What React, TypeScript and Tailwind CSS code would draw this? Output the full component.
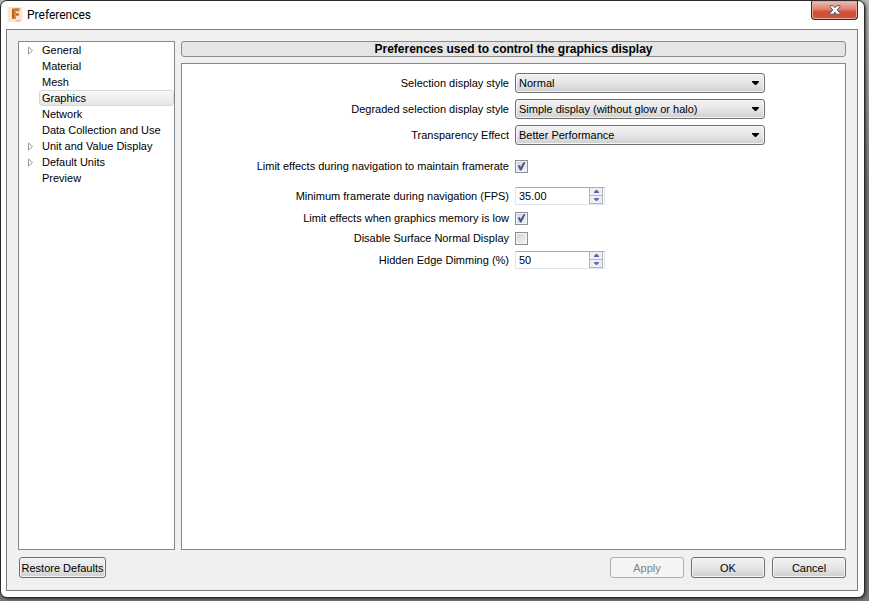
import { useState } from "react";
import type { ReactNode } from "react";
import clsx from "clsx";

interface TreeItem {
  label: string;
  expandable?: boolean;
}

const TREE_ITEMS: TreeItem[] = [
  { label: "General", expandable: true },
  { label: "Material" },
  { label: "Mesh" },
  { label: "Graphics" },
  { label: "Network" },
  { label: "Data Collection and Use" },
  { label: "Unit and Value Display", expandable: true },
  { label: "Default Units", expandable: true },
  { label: "Preview" },
];

function AppIcon() {
  return (
    <svg width="16" height="16" viewBox="0 0 16 16" aria-hidden="true">
      <rect x=".5" width="15" height="15" rx="1" fill="#fce4d2" />
      <path d="M5 1.500h7.500v3H9v2h2.800v2.500H9v3H5z" fill="#e08a3c" />
      <path d="M5 1.500l2 1v9.500l-2-1z" fill="#b5651f" />
      <path d="M7 1.500h5.500v1.500H7z" fill="#c07030" />
      <path d="M9 6.500h2.800v1.200H9z" fill="#a65a20" />
      <path d="M8.500 13h4.500v1.500H8.500z" fill="#f3b888" />
    </svg>
  );
}

function TitleBar() {
  return (
    <header className="flex h-7 shrink-0 items-start justify-between">
      <div className="flex h-7 items-center gap-1 pl-[6px]">
        <AppIcon />
        <h1 className="font-[Roboto,sans-serif] text-[12px] text-black">Preferences</h1>
      </div>
      <button
        type="button"
        aria-label="Close"
        className="mr-[6px] flex h-[19px] w-[47px] items-center justify-center rounded-b-[4px] border border-t-0 border-[#4a2325] bg-linear-to-b from-[#efc0b4] from-0% via-[#dc8270] via-45% to-[#d0503a] to-60% shadow-[inset_0_0_0_1px_#eba694]"
      >
        <svg width="12" height="10" viewBox="0 0 12 10" aria-hidden="true">
          <path
            d="M1 .7h3.200L6 2.800 7.800.7H11v1L8.200 5 11 8.300v1H7.800L6 7.200 4.200 9.300H1v-1L3.800 5 1 1.700z"
            fill="#fff"
            stroke="#59596b"
            strokeWidth="1"
          />
        </svg>
      </button>
    </header>
  );
}

function Sidebar() {
  const [selected, setSelected] = useState("Graphics");

  return (
    <nav className="w-[157px] shrink-0 border border-[#828790] bg-white">
      <ul>
        {TREE_ITEMS.map((item) => (
          <li key={item.label} className="flex h-4 items-center pl-2">
            <span className="flex w-3 shrink-0">
              {item.expandable && (
                <svg width="7" height="9" viewBox="0 0 7 9" aria-hidden="true">
                  <path d="M1.500 1v7L5.500 4.500z" fill="#fff" stroke="#999" />
                </svg>
              )}
            </span>
            <button
              type="button"
              onClick={() => setSelected(item.label)}
              className={clsx(
                "h-4 flex-1 rounded-[3px] border pl-[2px] text-left leading-[14px] whitespace-nowrap",
                selected === item.label
                  ? "border-[#d9d9d9] bg-linear-to-b from-[#fafafa] to-[#e5e5e5]"
                  : "border-transparent",
              )}
            >
              {item.label}
            </button>
          </li>
        ))}
      </ul>
    </nav>
  );
}

interface RowProps {
  id: string;
  label: string;
  className?: string;
  children: ReactNode;
}

function Row({ id, label, className, children }: RowProps) {
  return (
    <div className={clsx("grid grid-cols-2 items-center gap-x-[6px]", className)}>
      <label htmlFor={id} className="text-right whitespace-nowrap">
        {label}
      </label>
      <div className="flex items-center">{children}</div>
    </div>
  );
}

function Select({ id, options }: { id: string; options: string[] }) {
  return (
    <div className="relative w-[250px]">
      <select
        id={id}
        className="block h-5 w-full appearance-none rounded-[3px] border border-[#707070] bg-linear-to-b from-[#f2f2f2] from-0% via-[#e6e6e6] via-50% to-[#cfcfcf] to-100% pl-[3px] leading-[18px] shadow-[inset_0_0_0_1px_#f4f4f4]"
      >
        {options.map((option) => (
          <option key={option}>{option}</option>
        ))}
      </select>
      <svg
        className="pointer-events-none absolute top-2 right-[6px]"
        width="7"
        height="4"
        viewBox="0 0 7 4"
        aria-hidden="true"
      >
        <path d="M0 0h7v1L4 4H3L0 1z" fill="#000" />
      </svg>
    </div>
  );
}

function Checkbox({ id, defaultChecked }: { id: string; defaultChecked?: boolean }) {
  return (
    <span className="relative flex">
      <input
        id={id}
        type="checkbox"
        defaultChecked={defaultChecked}
        className="peer size-[13px] appearance-none border border-[#8e8f8f] bg-linear-to-br from-[#cfd2d6] to-[#f6f6f6] shadow-[inset_0_0_0_1px_#f4f4f4]"
      />
      <svg
        className="pointer-events-none absolute inset-0 hidden peer-checked:block"
        width="13"
        height="13"
        viewBox="0 0 13 13"
        aria-hidden="true"
      >
        <path d="M2.800 5.800l1.700-.8L5.700 7 8.500 2.300h2L6.500 10.500H5z" fill="#42599c" />
      </svg>
    </span>
  );
}

interface SpinBoxProps {
  id: string;
  initial: number;
  digits?: number;
}

function SpinBox({ id, initial, digits = 0 }: SpinBoxProps) {
  const [value, setValue] = useState(initial.toFixed(digits));
  const step = (delta: number) => setValue((Number(value) + delta).toFixed(digits));

  return (
    <div className="flex h-[18px] w-[90px] rounded-[1px] border border-[#dfe4ee] border-t-[#abadb3] bg-white pr-px">
      <input
        id={id}
        type="text"
        value={value}
        onChange={(e) => setValue(e.target.value)}
        className="w-0 flex-1 pl-[3px] outline-none"
      />
      <div className="flex w-[14px] flex-col border border-t-0 border-[#b4b6bb] bg-[#f0f0f0]">
        <button
          type="button"
          aria-label="Increase"
          onClick={() => step(1)}
          className="flex flex-1 items-center justify-center border-b border-[#b4b6bb]"
        >
          <svg width="5" height="3" viewBox="0 0 5 3" aria-hidden="true">
            <path d="M2 0h1l2 2v1H0V2z" fill="#5265a8" />
          </svg>
        </button>
        <button
          type="button"
          aria-label="Decrease"
          onClick={() => step(-1)}
          className="flex flex-1 items-center justify-center"
        >
          <svg width="5" height="3" viewBox="0 0 5 3" aria-hidden="true">
            <path d="M0 0h5v1L3 3H2L0 1z" fill="#5b70bd" />
          </svg>
        </button>
      </div>
    </div>
  );
}

function GraphicsPanel() {
  return (
    <form className="flex flex-1 flex-col border border-[#828790] bg-white pt-[9px] pr-[3px]">
      <div className="flex flex-col gap-[6px]">
        <Row id="selection-style" label="Selection display style">
          <Select id="selection-style" options={["Normal", "Simple"]} />
        </Row>
        <Row id="degraded-style" label="Degraded selection display style">
          <Select
            id="degraded-style"
            options={["Simple display (without glow or halo)", "Normal"]}
          />
        </Row>
        <Row id="transparency" label="Transparency Effect">
          <Select id="transparency" options={["Better Performance", "Better Display"]} />
        </Row>
      </div>
      <Row
        id="limit-navigation"
        label="Limit effects during navigation to maintain framerate"
        className="mt-3 h-[18px]"
      >
        <Checkbox id="limit-navigation" defaultChecked />
      </Row>
      <Row
        id="min-framerate"
        label="Minimum framerate during navigation (FPS)"
        className="mt-3 h-[18px]"
      >
        <SpinBox id="min-framerate" initial={35} digits={2} />
      </Row>
      <Row id="limit-memory" label="Limit effects when graphics memory is low" className="mt-1 h-[18px]">
        <Checkbox id="limit-memory" defaultChecked />
      </Row>
      <Row id="disable-normal" label="Disable Surface Normal Display" className="mt-[2px] h-[18px]">
        <Checkbox id="disable-normal" />
      </Row>
      <Row id="edge-dimming" label="Hidden Edge Dimming (%)" className="mt-1 h-[18px]">
        <SpinBox id="edge-dimming" initial={50} />
      </Row>
    </form>
  );
}

interface PushButtonProps {
  className: string;
  disabled?: boolean;
  children: ReactNode;
}

function PushButton({ className, disabled, children }: PushButtonProps) {
  return (
    <button
      type="button"
      disabled={disabled}
      className={clsx(
        "h-[21px] rounded-[3px] border text-center whitespace-nowrap",
        disabled
          ? "border-[#adb2b5] bg-[#f4f4f4] text-[#838383]"
          : "border-[#707070] bg-linear-to-b from-[#f2f2f2] from-0% via-[#e6e6e6] via-50% to-[#cfcfcf] to-100% text-black shadow-[inset_0_0_0_1px_#f4f4f4]",
        className,
      )}
    >
      {children}
    </button>
  );
}

export default function App() {
  return (
    <div className="flex min-h-screen flex-col bg-linear-to-b from-[#b8b8b8] to-[#777] to-30% pr-1 pb-[3px] font-['Liberation_Sans',Arial,sans-serif] text-[11px] leading-[14px] text-black">
      <div className="flex flex-1 flex-col rounded-[7px] border border-[#2b2b2b] bg-white shadow-[1px_1px_3px_#333]">
        <TitleBar />
        <main className="mr-[6px] mb-[6px] ml-[5px] flex flex-1 flex-col border border-[#7c7e7e] bg-[#f0f0f0] px-[11px] pt-[11px] pb-3">
          <div className="flex flex-1 gap-[6px]">
            <Sidebar />
            <section className="flex flex-1 flex-col gap-[6px]">
              <h2 className="h-4 rounded-[3px] border border-[#8c8c8c] bg-[#e5e5e5] text-center text-[12px] leading-[14px] font-bold">
                Preferences used to control the graphics display
              </h2>
              <GraphicsPanel />
            </section>
          </div>
          <footer className="mt-[7px] flex items-center justify-between pl-px">
            <PushButton className="w-[87px]">Restore Defaults</PushButton>
            <div className="flex gap-[7px]">
              <PushButton className="w-[74px]" disabled>
                Apply
              </PushButton>
              <PushButton className="w-[74px]">OK</PushButton>
              <PushButton className="w-[74px]">Cancel</PushButton>
            </div>
          </footer>
        </main>
      </div>
    </div>
  );
}
